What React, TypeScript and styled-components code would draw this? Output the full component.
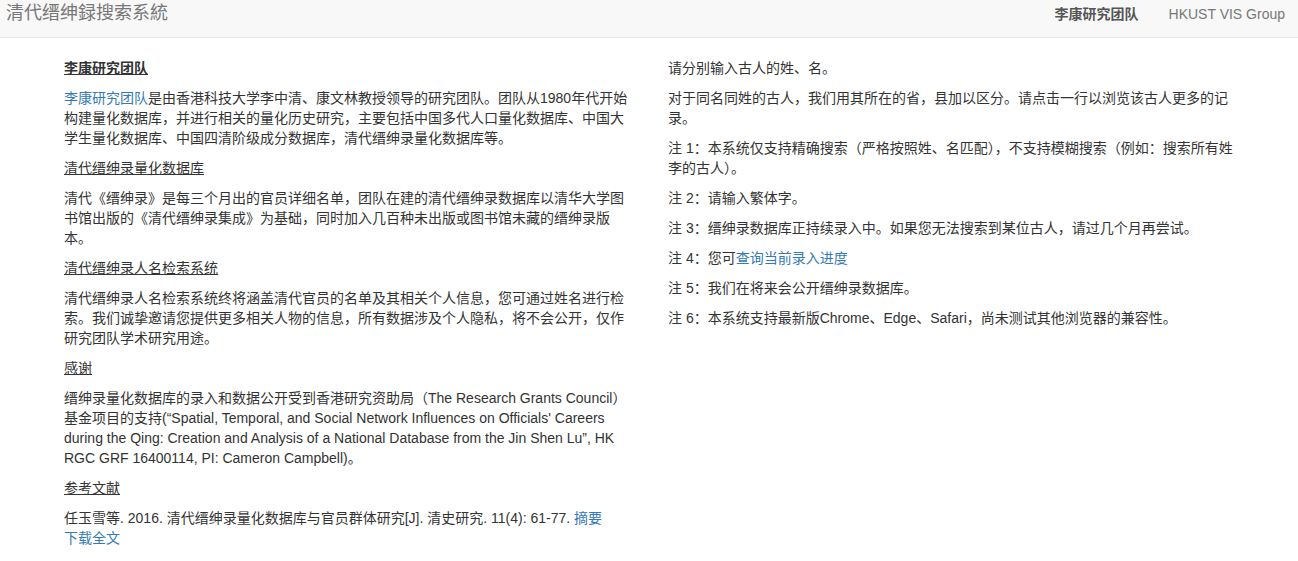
import React, { FC } from "react";
import styled, { createGlobalStyle } from "styled-components";

const GlobalStyle = createGlobalStyle`
    html, body {
        margin: 0;
        padding: 0;
        background: #fff;
    }

    body {
        font-family: "Liberation Sans", Arial, "Noto Sans CJK SC", sans-serif;
        font-size: 14px;
        line-height: 20px;
        color: #333;
    }
`;

const Navbar = styled.nav`
    display: flex;
    align-items: flex-start;
    justify-content: space-between;
    height: 38px;
    box-sizing: border-box;
    background: #f8f8f8;
    border-bottom: 1px solid #e7e7e7;
    margin-bottom: 20px;
`;

const Brand = styled.a`
    font-size: 18px;
    line-height: 20px;
    color: #777;
    padding: 3px 0 0 6px;
    text-decoration: none;
`;

const NavList = styled.ul`
    display: flex;
    list-style: none;
    margin: 0 -2px 0 0;
    padding: 0;
`;

const NavItem = styled.li<{ $active?: boolean }>`
    padding: 4px 15px 0;
    line-height: 20px;
    font-size: 14px;
    color: ${(p) => (p.$active ? "#555" : "#777")};
    font-weight: ${(p) => (p.$active ? "bold" : "normal")};
`;

const Row = styled.main`
    display: grid;
    grid-template-columns: 570px 570px;
    column-gap: 34px;
    padding-left: 64px;
`;

const Column = styled.section`
    display: flex;
    flex-direction: column;
`;

const Para = styled.p`
    margin: 0 0 10px;
`;

const Heading = styled.p<{ $bold?: boolean }>`
    margin: 0 0 10px;
    text-decoration: underline;
    font-weight: ${(p) => (p.$bold ? "bold" : "normal")};
`;

const Link = styled.a`
    color: #337ab7;
    text-decoration: none;
`;

const Note: FC<{ n: number; children: React.ReactNode }> = ({ n, children }) => (
    <Para>
        注 {n}：{children}
    </Para>
);

const App: FC = () => {
    return (
        <>
            <GlobalStyle />
            <Navbar>
                <Brand href="#">清代缙绅録搜索系統</Brand>
                <NavList>
                    <NavItem $active>李康研究团队</NavItem>
                    <NavItem>HKUST VIS Group</NavItem>
                </NavList>
            </Navbar>
            <Row>
                <Column>
                    <Heading $bold>李康研究团队</Heading>
                    <Para>
                        <Link href="#">李康研究团队</Link>
                        是由香港科技大学李中清、康文林教授领导的研究团队。团队从1980年代开始构建量化数据库，并进行相关的量化历史研究，主要包括中国多代人口量化数据库、中国大学生量化数据库、中国四清阶级成分数据库，清代缙绅录量化数据库等。
                    </Para>
                    <Heading>清代缙绅录量化数据库</Heading>
                    <Para>
                        清代《缙绅录》是每三个月出的官员详细名单，团队在建的清代缙绅录数据库以清华大学图书馆出版的《清代缙绅录集成》为基础，同时加入几百种未出版或图书馆未藏的缙绅录版本。
                    </Para>
                    <Heading>清代缙绅录人名检索系统</Heading>
                    <Para>
                        清代缙绅录人名检索系统终将涵盖清代官员的名单及其相关个人信息，您可通过姓名进行检索。我们诚挚邀请您提供更多相关人物的信息，所有数据涉及个人隐私，将不会公开，仅作研究团队学术研究用途。
                    </Para>
                    <Heading>感谢</Heading>
                    <Para>
                        缙绅录量化数据库的录入和数据公开受到香港研究资助局（The Research Grants Council）基金项目的支持(“Spatial, Temporal, and Social Network Influences on Officials' Careers during the Qing: Creation and Analysis of a National Database from the Jin Shen Lu”, HK RGC GRF 16400114, PI: Cameron Campbell)。
                    </Para>
                    <Heading>参考文献</Heading>
                    <Para>
                        任玉雪等. 2016. 清代缙绅录量化数据库与官员群体研究[J]. 清史研究. 11(4): 61-77.{" "}
                        <Link href="#">摘要</Link>
                        <br />
                        <Link href="#">下载全文</Link>
                    </Para>
                </Column>
                <Column>
                    <Para>请分别输入古人的姓、名。</Para>
                    <Para>对于同名同姓的古人，我们用其所在的省，县加以区分。请点击一行以浏览该古人更多的记录。</Para>
                    <Note n={1}>本系统仅支持精确搜索（严格按照姓、名匹配），不支持模糊搜索（例如：搜索所有姓李的古人）。</Note>
                    <Note n={2}>请输入繁体字。</Note>
                    <Note n={3}>缙绅录数据库正持续录入中。如果您无法搜索到某位古人，请过几个月再尝试。</Note>
                    <Note n={4}>
                        您可<Link href="#">查询当前录入进度</Link>
                    </Note>
                    <Note n={5}>我们在将来会公开缙绅录数据库。</Note>
                    <Note n={6}>本系统支持最新版Chrome、Edge、Safari，尚未测试其他浏览器的兼容性。</Note>
                </Column>
            </Row>
        </>
    );
};

export default App;
